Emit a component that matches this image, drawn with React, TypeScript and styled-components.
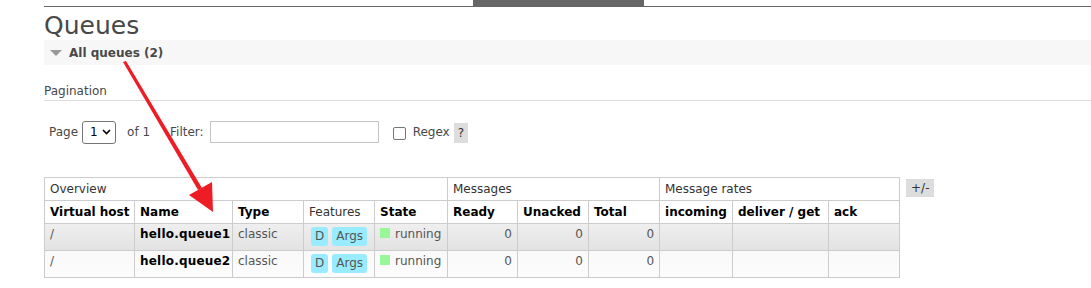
import React from 'react'
import styled, { createGlobalStyle } from 'styled-components'

const GlobalStyle = createGlobalStyle`
    body {
        margin: 0;
        background: #fff;
        font-family: "DejaVu Sans", Verdana, sans-serif;
        font-size: 12px;
        color: #484848;
    }
`

type Queue = {
    vhost: string;
    name: string;
    type: string;
    state: string;
    ready: number;
    unacked: number;
    total: number;
}

const queues: Queue[] = [
    { vhost: '/', name: 'hello.queue1', type: 'classic', state: 'running', ready: 0, unacked: 0, total: 0 },
    { vhost: '/', name: 'hello.queue2', type: 'classic', state: 'running', ready: 0, unacked: 0, total: 0 },
]

// border-to-border widths of the eleven columns
const colWidths = [90, 98, 71, 71, 73, 70, 71, 71, 73, 96, 71]

const Page = styled.div`
    position: relative;
    padding-left: 44px;
    width: 1047px;
`

const TopNav = styled.div`
    height: 6px;
    border-bottom: 1px solid #666;
`

const NavTab = styled.div`
    margin-left: 429px;
    width: 171px;
    height: 6px;
    background: #666;
`

const Title = styled.h1`
    margin: 0;
    height: 33px;
    font-size: 25px;
    font-weight: normal;
    line-height: 38px;
    color: #484848;
`

const SectionBar = styled.div`
    display: flex;
    align-items: center;
    gap: 7px;
    height: 25px;
    padding-left: 6px;
    background: #f7f7f7;
    font-weight: bold;
    font-size: 12px;
    color: #484848;
`

const Triangle = styled.span`
    width: 0;
    height: 0;
    border-left: 6px solid transparent;
    border-right: 6px solid transparent;
    border-top: 6px solid #999;
`

const SubHeading = styled.div`
    margin-top: 19px;
    padding-bottom: 1px;
    border-bottom: 1px solid #ddd;
    line-height: 15px;
`

const Controls = styled.div`
    display: flex;
    align-items: center;
    height: 24px;
    margin-top: 19px;
    padding-left: 5px;
`

const Label = styled.span<{ gap?: number }>`
    margin-right: ${p => p.gap ?? 6}px;
`

const Select = styled.div`
    display: flex;
    align-items: center;
    justify-content: space-between;
    box-sizing: border-box;
    width: 34px;
    height: 23px;
    padding: 0 4px 0 7px;
    margin-right: 11px;
    border: 1px solid #767676;
    border-radius: 3px;
    color: #000;
`

const TextInput = styled.div`
    box-sizing: border-box;
    width: 169px;
    height: 22px;
    margin-right: 14px;
    border: 1px solid #c4c4c4;
`

const Checkbox = styled.div`
    box-sizing: border-box;
    width: 13px;
    height: 13px;
    margin: 2px 7px 0 0;
    border: 1px solid #767676;
    border-radius: 2px;
`

const HelpButton = styled.span`
    margin: 2px 0 0 4px;
    padding: 3px 4px;
    background: #ddd;
    color: #333;
`

const TableRow = styled.div`
    display: flex;
    align-items: flex-start;
    gap: 6px;
    margin-top: 33px;
`

const Table = styled.table`
    border-collapse: collapse;
    width: 855px;
    table-layout: fixed;
`

const Col = styled.col<{ w: number }>`
    width: ${p => p.w}px;
`

const Th = styled.th<{ light?: boolean }>`
    border: 1px solid #ccc;
    height: 23px;
    box-sizing: border-box;
    padding: 0 5px;
    text-align: left;
    font-weight: ${p => (p.light ? 'normal' : 'bold')};
    color: ${p => (p.light ? '#333' : '#000')};
    white-space: nowrap;
    overflow: hidden;
`

const Tr = styled.tr<{ alt: boolean }>`
    background: ${p =>
        p.alt
            ? 'linear-gradient(to bottom, #f9f9f9, #fcfcfc)'
            : 'linear-gradient(to bottom, #efefef, #e2e2e2)'};
`

const Td = styled.td<{ num?: boolean; strong?: boolean }>`
    border: 1px solid #ccc;
    height: 27px;
    padding: 3px 5px 0;
    vertical-align: top;
    text-align: ${p => (p.num ? 'right' : 'left')};
    font-weight: ${p => (p.strong ? 'bold' : 'normal')};
    color: ${p => (p.strong ? '#000' : '#555')};
    letter-spacing: ${p => (p.strong ? '0.2px' : '0')};
    box-sizing: border-box;
    white-space: nowrap;
`

const Badge = styled.span`
    display: inline-block;
    margin: 0 4px 0 2px;
    padding: 3px 4px;
    line-height: 13px;
    border-radius: 3px;
    background: #99ebff;
    color: #555;

    & + & {
        margin-left: 0;
    }
`

const StateDot = styled.span`
    display: inline-block;
    width: 10px;
    height: 10px;
    margin-right: 5px;
    background: #98f898;
`

const ToggleButton = styled.span`
    margin-top: 2px;
    padding: 2px 5px;
    background: #ddd;
    color: #333;
`

const Arrow = styled.svg`
    position: absolute;
    left: 0;
    top: 0;
    pointer-events: none;
`

export default function App() {
    return (
        <>
            <GlobalStyle />
            <Page>
                <TopNav>
                    <NavTab />
                </TopNav>
                <Title>Queues</Title>
                <SectionBar>
                    <Triangle />
                    All queues (2)
                </SectionBar>
                <SubHeading>Pagination</SubHeading>
                <Controls>
                    <Label gap={4}>Page</Label>
                    <Select>
                        1
                        <svg width="9" height="6" viewBox="0 0 9 6">
                            <path d="M1 1 L4.5 4.5 L8 1" stroke="#000" strokeWidth="1.6" fill="none" />
                        </svg>
                    </Select>
                    <Label gap={20}>of 1</Label>
                    <Label>Filter:</Label>
                    <TextInput />
                    <Checkbox />
                    <Label gap={0}>Regex</Label>
                    <HelpButton>?</HelpButton>
                </Controls>
                <TableRow>
                    <Table>
                        <colgroup>
                            {colWidths.map((w, i) => (
                                <Col key={i} w={w} />
                            ))}
                        </colgroup>
                        <thead>
                            <tr>
                                <Th light colSpan={5}>Overview</Th>
                                <Th light colSpan={3}>Messages</Th>
                                <Th light colSpan={3}>Message rates</Th>
                            </tr>
                            <tr>
                                <Th>Virtual host</Th>
                                <Th>Name</Th>
                                <Th>Type</Th>
                                <Th light>Features</Th>
                                <Th>State</Th>
                                <Th>Ready</Th>
                                <Th>Unacked</Th>
                                <Th>Total</Th>
                                <Th>incoming</Th>
                                <Th>deliver / get</Th>
                                <Th>ack</Th>
                            </tr>
                        </thead>
                        <tbody>
                            {queues.map((q, i) => (
                                <Tr key={q.name} alt={i % 2 === 1}>
                                    <Td>{q.vhost}</Td>
                                    <Td strong>{q.name}</Td>
                                    <Td>{q.type}</Td>
                                    <Td>
                                        <Badge>D</Badge>
                                        <Badge>Args</Badge>
                                    </Td>
                                    <Td>
                                        <StateDot />
                                        {q.state}
                                    </Td>
                                    <Td num>{q.ready}</Td>
                                    <Td num>{q.unacked}</Td>
                                    <Td num>{q.total}</Td>
                                    <Td />
                                    <Td />
                                    <Td />
                                </Tr>
                            ))}
                        </tbody>
                    </Table>
                    <ToggleButton>+/-</ToggleButton>
                </TableRow>
                <Arrow width="1091" height="288" viewBox="0 0 1091 288">
                    <polygon points="123,62 126,61 202,188 198,190" fill="#ee1c25" />
                    <polygon points="189,195 212,182 213,212" fill="#ee1c25" />
                </Arrow>
            </Page>
        </>
    )
}
